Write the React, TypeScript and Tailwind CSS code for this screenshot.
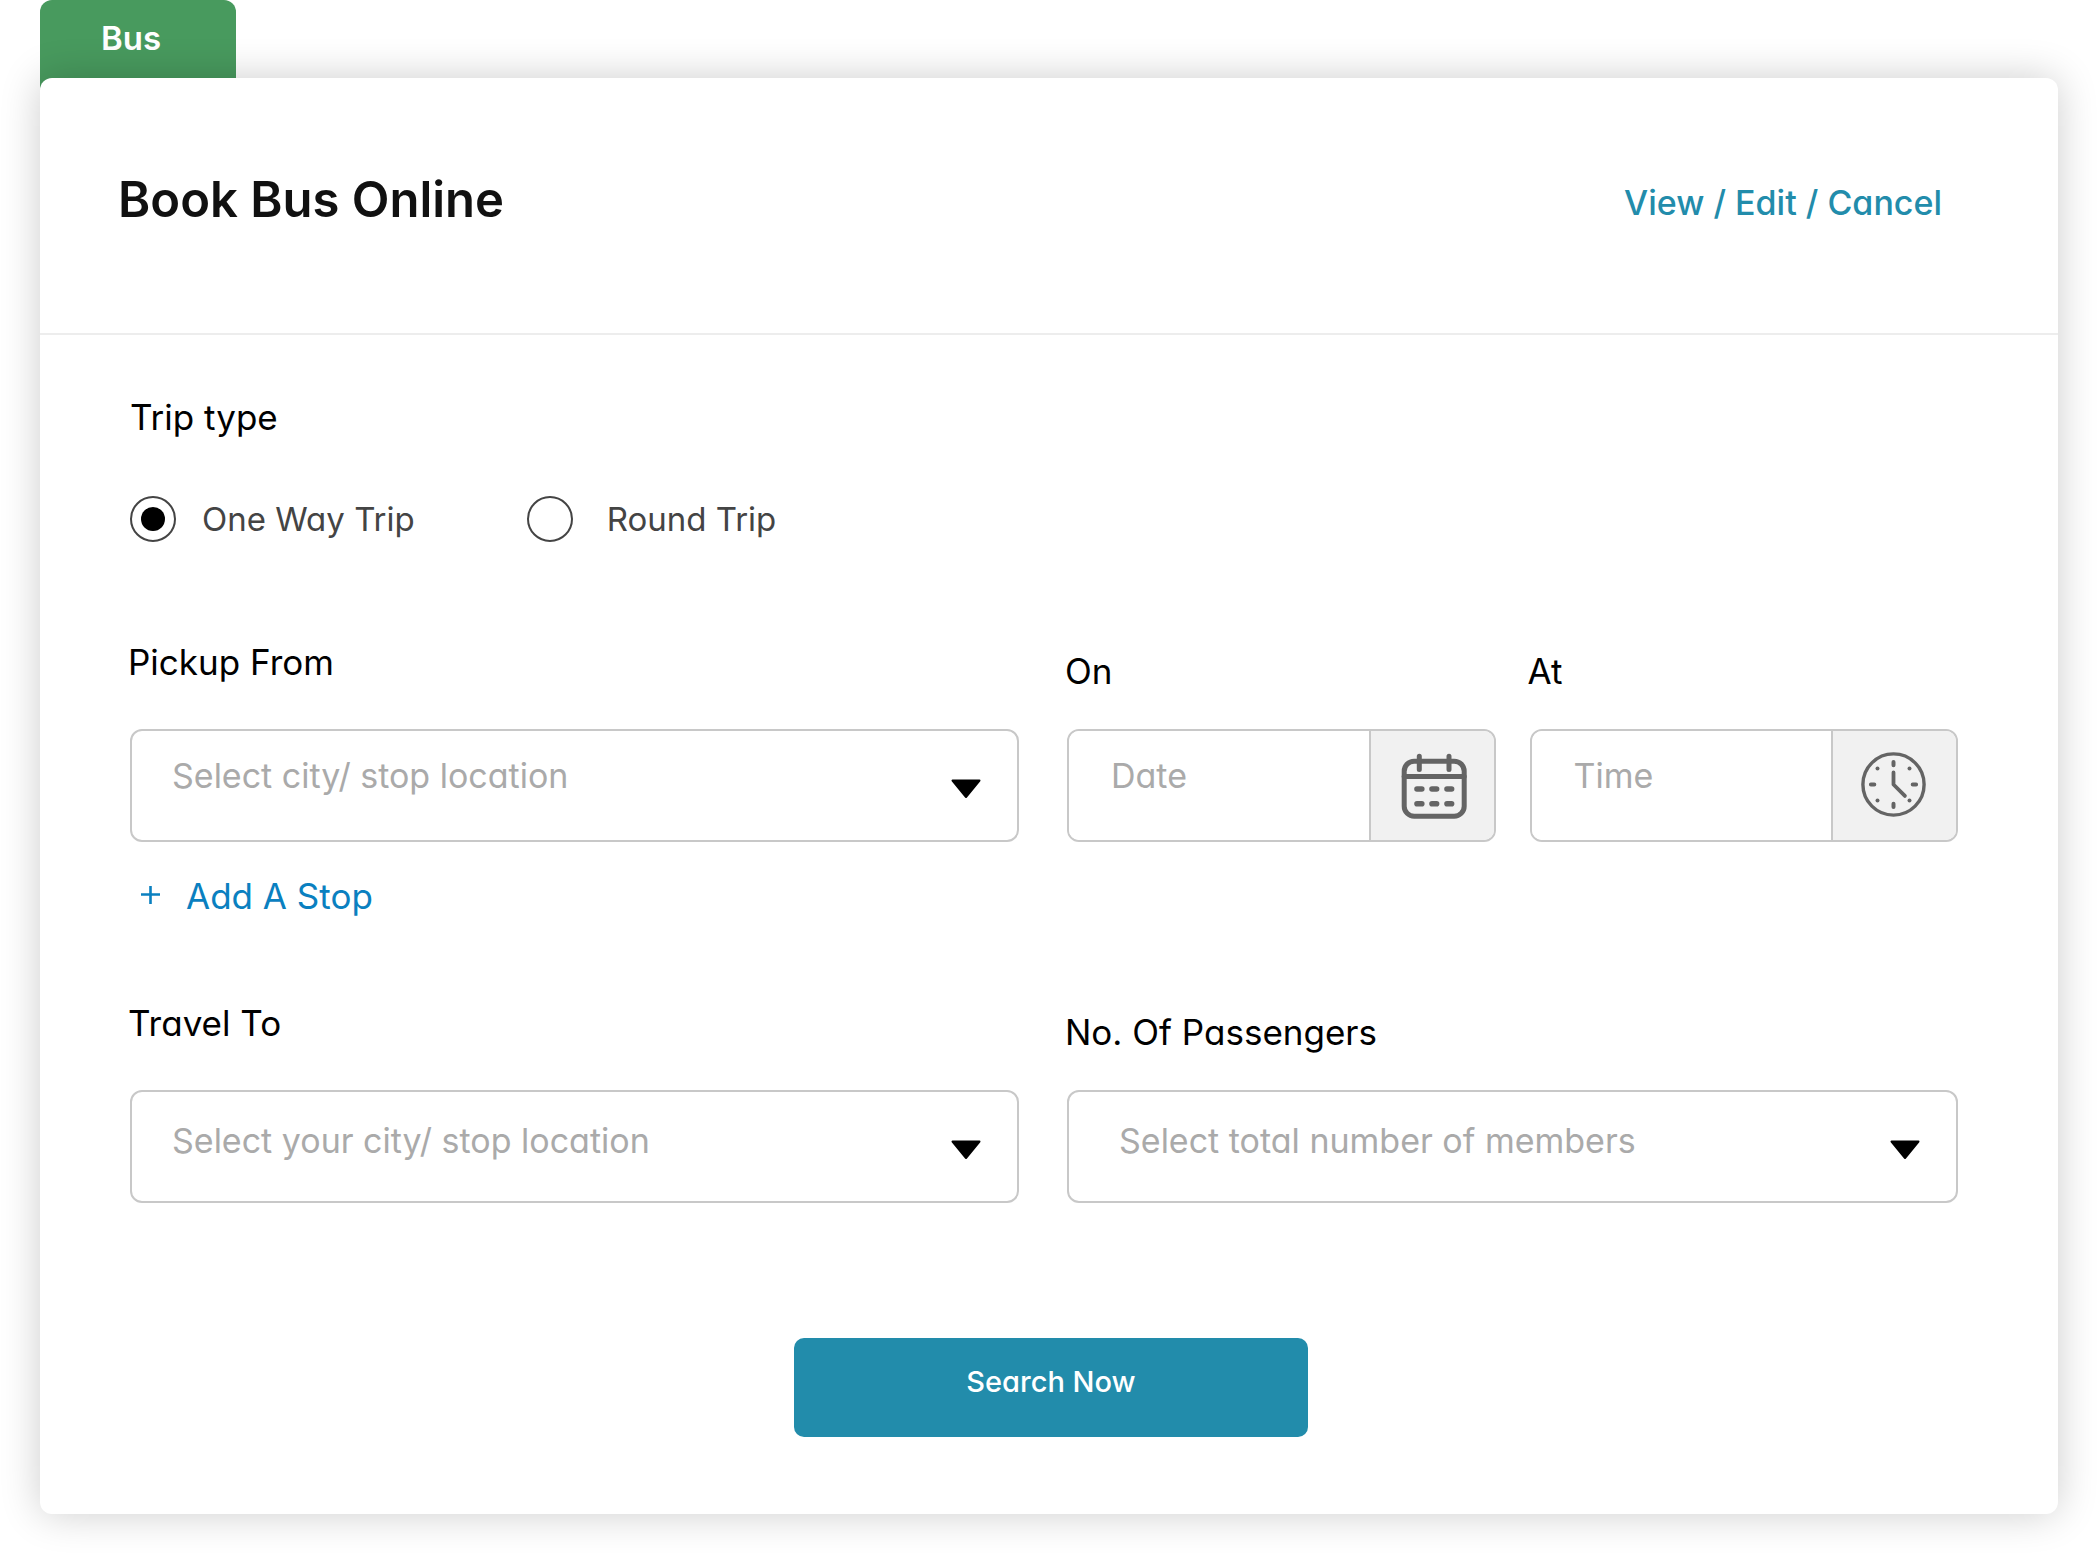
import { useState } from 'react';
import type { ReactNode } from 'react';

const tripTypes = [
  { id: 'one-way', label: 'One Way Trip', gap: 'gap-[26px]' },
  { id: 'round', label: 'Round Trip', gap: 'gap-[34px]' },
];

function CalendarIcon() {
  return (
    <svg className="w-[70px] h-[66px]" viewBox="-4 0 70 66" fill="none" stroke="#646464" strokeWidth="5" strokeLinecap="round">
      <rect x="3.2" y="8.2" width="60" height="55" rx="10" />
      <path d="M3.2 23.5h60" />
      <path d="M18.3 3.2v13.4M48 3.2v13.4" />
      <path strokeWidth="5.6" d="M16 36h4.8M31 36h4.6M46 36h4.6M16 50.7h4.8M31 50.7h4.6M46 50.7h4.6" />
    </svg>
  );
}

function ClockIcon() {
  return (
    <svg className="size-[68px]" viewBox="0 0 68 68" fill="none" stroke="#646464" strokeLinecap="round" strokeLinejoin="round">
      <circle cx="32.5" cy="32.5" r="30.6" strokeWidth="3.4" />
      <path strokeWidth="3.8" d="M32.5 20.5v12l11.4 11.4" />
      <path strokeWidth="4" d="M32.5 9.9v3.4M32.5 51.7v3.4M9.9 32.5h3.4M51.7 32.5h3.4" />
      <g fill="#646464" stroke="none">
        <circle cx="16.5" cy="16.5" r="2" />
        <circle cx="48.5" cy="16.5" r="2" />
        <circle cx="16.5" cy="48.5" r="2" />
        <circle cx="48.5" cy="48.5" r="2" />
      </g>
    </svg>
  );
}

interface SelectFieldProps {
  id: string;
  label: string;
  placeholder: string;
  options: string[];
  labelClass?: string;
  selectClass: string;
}

function SelectField({ id, label, placeholder, options, labelClass = '', selectClass }: SelectFieldProps) {
  return (
    <div>
      <label htmlFor={id} className={`-ml-0.5 block h-[87px] text-[35px] leading-10 text-black ${labelClass}`}>
        {label}
      </label>
      <div className="relative">
        <select
          id={id}
          defaultValue=""
          className={`block w-full h-[113px] appearance-none rounded-xl border-2 border-[#c8c8c8] bg-white pr-24 text-[34px] text-[#aaaaaa] ${selectClass}`}
        >
          <option value="" disabled>{placeholder}</option>
          {options.map((option) => (
            <option key={option} value={option}>{option}</option>
          ))}
        </select>
        <svg className="pointer-events-none absolute right-[37px] top-[50px] w-8 h-5" viewBox="0 0 32 20">
          <path d="M2.5 1.5h27L16 18z" fill="#000" stroke="#000" strokeWidth="2" strokeLinejoin="round" />
        </svg>
      </div>
    </div>
  );
}

function PickerField({ id, label, placeholder, icon }: { id: string; label: string; placeholder: string; icon: ReactNode }) {
  return (
    <div>
      <label htmlFor={id} className="-ml-0.5 block h-[87px] pt-[9px] text-[35px] leading-10 text-black">
        {label}
      </label>
      <div className="flex h-[113px] overflow-hidden rounded-xl border-2 border-[#c8c8c8]">
        <input
          id={id}
          type="text"
          placeholder={placeholder}
          className="min-w-0 flex-1 bg-white pl-[42px] pb-5 text-[34px] text-[#444444] placeholder-[#aaaaaa]"
        />
        <button
          type="button"
          aria-label={`Pick ${placeholder.toLowerCase()}`}
          className="flex w-[125px] items-center justify-center border-l-2 border-[#c8c8c8] bg-[#f1f1f1]"
        >
          {icon}
        </button>
      </div>
    </div>
  );
}

export default function App() {
  const [tripType, setTripType] = useState('one-way');

  return (
    <div className="bg-white px-10 pb-10 font-['Inter','Liberation_Sans',sans-serif] [font-feature-settings:'cv11']">
      {/* Tab */}
      <button type="button" className="-mb-3 block h-[90px] w-[196px] rounded-t-xl bg-[#489a5e] pl-[61px] pb-3 text-left text-[33px] font-semibold text-white">
        Bus
      </button>

      <main className="relative rounded-xl bg-white shadow-[0_0_40px_rgba(0,0,0,0.2)]">
        {/* Header */}
        <header className="flex items-end justify-between border-b-2 border-[#ededed] pt-[92px] pr-[116px] pb-[103px] pl-[78px]">
          <h1 className="text-[49px] leading-[60px] font-semibold text-[#111111]">Book Bus Online</h1>
          <a href="#manage" className="text-[34px] leading-[54px] font-medium text-[#228cab]">View / Edit / Cancel</a>
        </header>

        <form onSubmit={(e) => e.preventDefault()}>
          <div className="pt-[62px] pr-[100px] pl-[90px]">
            {/* Trip type */}
            <fieldset>
              <legend className="mb-[59px] text-[35px] leading-10 text-black">Trip type</legend>
              <div className="flex gap-28">
                {tripTypes.map((trip) => (
                  <label key={trip.id} className={`flex items-center text-[33px] leading-10 text-[#444444] ${trip.gap}`}>
                    <input
                      type="radio"
                      name="trip"
                      value={trip.id}
                      checked={tripType === trip.id}
                      onChange={() => setTripType(trip.id)}
                      className="grid size-[46px] appearance-none place-items-center rounded-full border-2 border-[#444444] checked:before:block checked:before:size-6 checked:before:rounded-full checked:before:bg-black"
                    />
                    {trip.label}
                  </label>
                ))}
              </div>
            </fieldset>

            {/* Pickup */}
            <div className="mt-[100px] grid grid-cols-[889fr_891fr] gap-12">
              <div>
                <SelectField
                  id="pickup"
                  label="Pickup From"
                  placeholder="Select city/ stop location"
                  options={['Central Station', 'Airport', 'Downtown']}
                  selectClass="pl-10 pb-5"
                />
                <button type="button" className="mt-[34px] ml-2.5 flex items-center gap-[26px] text-[35px] leading-10 text-[#0a80c0]">
                  <svg className="size-5" viewBox="0 0 20 20" fill="none" stroke="currentColor" strokeWidth="2.6">
                    <path d="M10.5 -1v19M1 8.5h19" />
                  </svg>
                  Add A Stop
                </button>
              </div>
              <div className="grid grid-cols-2 gap-[34px]">
                <PickerField id="date" label="On" placeholder="Date" icon={<CalendarIcon />} />
                <PickerField id="time" label="At" placeholder="Time" icon={<ClockIcon />} />
              </div>
            </div>

            {/* Destination */}
            <div className="mt-[87px] grid grid-cols-[889fr_891fr] gap-12">
              <SelectField
                id="destination"
                label="Travel To"
                placeholder="Select your city/ stop location"
                options={['Central Station', 'Airport', 'Downtown']}
                selectClass="pl-10 pb-3"
              />
              <SelectField
                id="passengers"
                label="No. Of Passengers"
                placeholder="Select total number of members"
                options={['1', '2', '3', '4', '5']}
                labelClass="pt-[9px]"
                selectClass="pl-[50px] pb-3"
              />
            </div>
          </div>

          <div className="flex justify-center pt-[135px] pb-[77px] pl-1">
            <button type="submit" className="h-[99px] w-[514px] rounded-[10px] bg-[#228cab] pb-3 text-[29px] font-medium text-white">
              Search Now
            </button>
          </div>
        </form>
      </main>
    </div>
  );
}
